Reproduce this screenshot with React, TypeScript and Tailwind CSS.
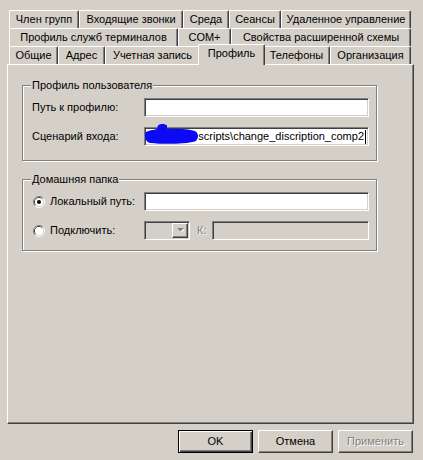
import React from "react";

const raised =
  "border border-t-white border-l-white border-r-[#404040] border-b-[#404040] shadow-[inset_-1px_-1px_0_#808080]";
const sunken =
  "border border-t-[#808080] border-l-[#808080] border-r-white border-b-white shadow-[inset_1px_1px_0_#404040,inset_-1px_-1px_0_#d4d0c8]";
const tabEdge =
  "border-t border-l border-r border-t-white border-l-white border-r-[#404040] rounded-t-[2px] shadow-[inset_-1px_0_0_#808080]";

function Tab({ label, className }: { label: string; className: string }) {
  return (
    <div className={`flex h-[18px] items-center justify-center whitespace-nowrap ${tabEdge} ${className}`}>
      {label}
    </div>
  );
}

function Radio({ checked }: { checked?: boolean }) {
  return (
    <svg width="12" height="12" viewBox="0 0 12 12" className="shrink-0">
      <path d="M2.11 9.89 A5.5 5.5 0 0 1 9.89 2.11" fill="none" stroke="#808080" />
      <path d="M9.89 2.11 A5.5 5.5 0 0 1 2.11 9.89" fill="none" stroke="#ffffff" />
      <path d="M2.82 9.18 A4.5 4.5 0 0 1 9.18 2.82" fill="none" stroke="#404040" />
      <path d="M9.18 2.82 A4.5 4.5 0 0 1 2.82 9.18" fill="none" stroke="#d4d0c8" />
      <circle cx="6" cy="6" r="4" fill="#ffffff" />
      {checked && <circle cx="6" cy="6" r="2" fill="#000000" />}
    </svg>
  );
}

function GroupBox({ title, className, children }: { title: string; className: string; children: React.ReactNode }) {
  return (
    <div
      className={`relative w-[355px] border border-[#808080] shadow-[inset_1px_1px_0_#fff,1px_1px_0_#fff] pl-[9px] pr-[7px] ${className}`}
    >
      <span className="absolute -top-[7px] left-[8px] bg-[#d4d0c8] px-[1px] leading-[13px]">{title}</span>
      {children}
    </div>
  );
}

export default function App() {
  return (
    <div className="h-[460px] w-[423px] bg-[#d4d0c8] pl-[7px] pt-[10px] font-['Liberation_Sans',Arial,sans-serif] text-[11px] leading-[13px] text-black">
      {/* tab rows */}
      <div className="ml-[2px] flex h-[18px] w-[402px] items-end">
        <Tab label="Член групп" className="w-[70px]" />
        <Tab label="Входящие звонки" className="w-[104px]" />
        <Tab label="Среда" className="w-[46px]" />
        <Tab label="Сеансы" className="w-[52px]" />
        <Tab label="Удаленное управление" className="w-[130px]" />
      </div>
      <div className="ml-[2px] flex h-[18px] w-[402px] items-end">
        <Tab label="Профиль служб терминалов" className="w-[169px]" />
        <Tab label="COM+" className="w-[53px]" />
        <Tab label="Свойства расширенной схемы" className="w-[180px]" />
      </div>
      <div className="ml-[2px] flex h-[18px] w-[402px] items-end">
        <Tab label="Общие" className="w-[49px]" />
        <Tab label="Адрес" className="w-[47px]" />
        <Tab label="Учетная запись" className="w-[95px]" />
        <div
          className={`relative z-10 -mx-[2px] -mb-[1px] flex h-[21px] w-[67px] items-center justify-center bg-[#d4d0c8] pb-[3px] ${tabEdge}`}
        >
          Профиль
        </div>
        <Tab label="Телефоны" className="w-[67px]" />
        <Tab label="Организация" className="w-[81px]" />
      </div>

      {/* page */}
      <div className="h-[360px] w-[407px] border-t border-l border-r border-b border-t-white border-l-white border-r-[#404040] border-b-[#404040] pl-[14px] pt-[20px] shadow-[inset_-1px_-1px_0_#808080]">
        <GroupBox title="Профиль пользователя" className="pt-[12px] pb-[14px]">
          <div className="flex h-[19px] items-center">
            <span className="w-[112px]">Путь к профилю:</span>
            <div className={`h-[19px] flex-1 bg-white ${sunken}`} />
          </div>
          <div className="mt-[10px] flex h-[19px] items-center">
            <span className="w-[112px]">Сценарий входа:</span>
            <div className={`relative flex h-[19px] min-w-0 flex-1 items-center justify-end bg-white pr-[2px] ${sunken}`}>
              <span className="whitespace-nowrap">scripts\change_discription_comp2</span>
              <span className="ml-[1px] h-[14px] w-[1px] shrink-0 bg-black" />
              {/* blue marker scribble hiding the server name */}
              <svg width="56" height="22" viewBox="0 0 56 22" className="absolute -top-[4px] left-0 overflow-visible">
                <path
                  d="M0 9 C3 6 9 6 12 5 L13 1.5 C15 -0.5 20 -0.5 22 1.5 L22 5 C31 4.5 43 5 50 7 C54 9 54 15 50 17.5 C40 20 20 20.5 5 19 C1 18 -0.5 14 0 9 Z"
                  fill="#0a0af5"
                />
              </svg>
            </div>
          </div>
        </GroupBox>

        <GroupBox title="Домашняя папка" className="mt-[18px] pt-[12px] pb-[10px]">
          <div className="flex h-[19px] items-center">
            <div className="flex w-[112px] items-center gap-[5px] pl-[1px]">
              <Radio checked />
              <span>Локальный путь:</span>
            </div>
            <div className={`h-[19px] flex-1 bg-white ${sunken}`} />
          </div>
          <div className="mt-[10px] flex h-[19px] items-center">
            <div className="flex w-[112px] items-center gap-[5px] pl-[1px]">
              <Radio />
              <span>Подключить:</span>
            </div>
            <div className={`flex h-[19px] w-[46px] items-center justify-end bg-[#d4d0c8] pr-[1px] ${sunken}`}>
              <div className={`flex h-[15px] w-[16px] items-center justify-center bg-[#d4d0c8] ${raised}`}>
                <svg width="7" height="5" viewBox="0 0 7 5">
                  <path d="M1 1 H8 L4.5 4.5 Z" fill="#ffffff" />
                  <path d="M0 0 H7 L3.5 3.5 Z" fill="#808080" />
                </svg>
              </div>
            </div>
            <span className="ml-[7px] w-[15px] text-[#808080] [text-shadow:1px_1px_0_#fff]">К:</span>
            <div className={`h-[19px] flex-1 bg-[#d4d0c8] ${sunken}`} />
          </div>
        </GroupBox>
      </div>

      {/* buttons */}
      <div className="mt-[6px] flex w-[406px] justify-end gap-[5px]">
        <button className="flex h-[23px] w-[75px] items-center justify-center border border-black bg-[#d4d0c8] shadow-[inset_1px_1px_0_#fff,inset_-1px_-1px_0_#404040,inset_-2px_-2px_0_#808080]">
          OK
        </button>
        <button className={`flex h-[23px] w-[75px] items-center justify-center bg-[#d4d0c8] ${raised}`}>
          Отмена
        </button>
        <button
          className={`flex h-[23px] w-[75px] items-center justify-center bg-[#d4d0c8] text-[#808080] [text-shadow:1px_1px_0_#fff] ${raised}`}
        >
          Применить
        </button>
      </div>
    </div>
  );
}
